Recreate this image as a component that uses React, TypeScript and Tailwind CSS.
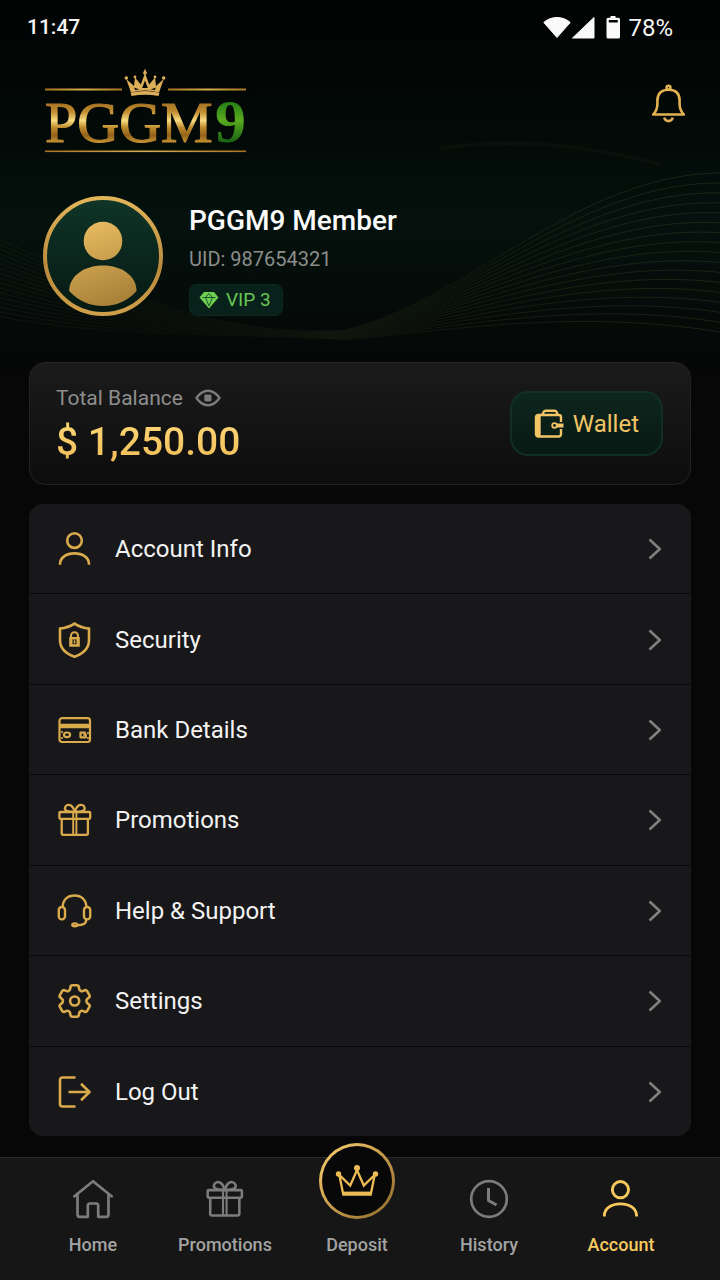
import React, { useState } from "react";

type IconProps = { className?: string };

const line = {
  fill: "none",
  stroke: "currentColor",
  strokeWidth: 2.6,
  strokeLinejoin: "round" as const,
};

function UserIcon({ className }: IconProps) {
  return (
    <svg viewBox="0 0 36 36" className={className} {...line} aria-hidden="true">
      <circle cx="17.5" cy="9.6" r="7.3" />
      <path d="M3 33.800v-.7C3 26.700 9 22.400 17.500 22.400S32 26.700 32 33.100v.7" />
    </svg>
  );
}

function ShieldIcon({ className }: IconProps) {
  return (
    <svg viewBox="0 0 36 36" className={className} {...line} strokeLinejoin="miter" aria-hidden="true">
      <path d="M17.5 1.6C13 4.5 8 6 3 6.6V18c0 8.400 5.500 13.600 14.500 16.800C26.500 31.600 32 26.400 32 18V6.600C27 6 22 4.500 17.500 1.600Z" />
      <path d="M14 15.500v-1.700a3.500 3.500 0 0 1 7 0v1.700" strokeWidth="2" />
      <path fill="currentColor" stroke="none" fillRule="evenodd" d="M12.200 15h10.600v9.800H12.200ZM15.500 17.500v4.800h4V17.500Z" />
      <path d="M17.500 18.200v3.400" strokeWidth="1.600" />
    </svg>
  );
}

function CardIcon({ className }: IconProps) {
  return (
    <svg viewBox="0 0 36 36" className={className} {...line} strokeWidth={2.200} aria-hidden="true">
      <rect x="2.500" y="6.200" width="30.500" height="23.800" rx="2.500" />
      <path d="M2.500 14h30.500" strokeWidth="4.400" />
      <ellipse cx="10" cy="22.800" rx="3.100" ry="2.300" />
      <path d="M28.800 20.500h-5.300v4.800h5.300v-2.600h-2.500" />
      <path d="M5 19v2M5 25v2M31 20v2M31 25v2" strokeWidth="1.600" />
    </svg>
  );
}

function GiftIcon({ className }: IconProps) {
  return (
    <svg viewBox="0 0 36 36" className={className} {...line} strokeWidth={2.300} aria-hidden="true">
      <rect x="2.400" y="10" width="30.800" height="6.800" rx="1" />
      <path d="M4.700 16.800v14.400a1.600 1.600 0 0 0 1.600 1.600h23a1.600 1.600 0 0 0 1.600-1.600V16.800" />
      <path d="M16.200 10v22.800M19.400 10v22.800" strokeWidth="1.900" />
      <path d="M17.500 9.800C9.500 10.200 7.500 8 8 5.700 8.600 3 11.600 2 14 3.500c2 1.300 3 3.800 3.500 6.300Z" />
      <path d="M18.100 9.800c8 .4 10-1.800 9.500-4.100C27 3 24 2 21.600 3.500c-2 1.300-3 3.800-3.500 6.300Z" />
    </svg>
  );
}

function HeadsetIcon({ className }: IconProps) {
  return (
    <svg viewBox="0 0 36 36" className={className} {...line} strokeWidth={2.400} aria-hidden="true">
      <rect x="1.800" y="14" width="6.200" height="12.400" rx="3" />
      <rect x="27" y="14" width="6.200" height="12.400" rx="3" />
      <path d="M5.700 14C5.700 7 10.400 2.500 17.500 2.500S29.300 7 29.300 14" />
      <path d="M29.300 26.400c0 4-3.400 5.800-9.300 5.800" />
      <ellipse cx="17.800" cy="31.800" rx="2.500" ry="1.400" />
    </svg>
  );
}

function GearIcon({ className }: IconProps) {
  return (
    <svg viewBox="1.900 1.700 20.600 20.600" className={className} {...line} strokeWidth={1.500} aria-hidden="true">
      <path d="M9.594 3.940c.09-.542.56-.94 1.110-.94h2.593c.55 0 1.020.398 1.110.94l.213 1.281c.063.374.313.686.645.87.074.04.147.083.22.127.325.196.72.257 1.075.124l1.217-.456a1.125 1.125 0 0 1 1.370.49l1.296 2.247a1.125 1.125 0 0 1-.26 1.431l-1.003.827c-.293.241-.438.613-.43.992a7.723 7.723 0 0 1 0 .255c-.008.378.137.75.43.991l1.004.827c.424.35.534.955.26 1.430l-1.298 2.247a1.125 1.125 0 0 1-1.369.491l-1.217-.456c-.355-.133-.75-.072-1.076.124a6.470 6.470 0 0 1-.22.128c-.331.183-.581.495-.644.869l-.213 1.281c-.09.543-.56.94-1.110.94h-2.594c-.55 0-1.019-.398-1.110-.94l-.213-1.281c-.062-.374-.312-.686-.644-.87a6.520 6.520 0 0 1-.22-.127c-.325-.196-.72-.257-1.076-.124l-1.217.456a1.125 1.125 0 0 1-1.369-.49l-1.297-2.247a1.125 1.125 0 0 1 .26-1.431l1.004-.827c.292-.24.437-.613.43-.991a6.932 6.932 0 0 1 0-.255c.007-.38-.138-.751-.43-.992l-1.004-.827a1.125 1.125 0 0 1-.26-1.430l1.297-2.247a1.125 1.125 0 0 1 1.370-.491l1.216.456c.356.133.751.072 1.076-.124.072-.044.146-.086.22-.128.332-.183.582-.495.644-.869l.214-1.280Z" />
      <circle cx="12" cy="12" r="2.600" />
    </svg>
  );
}

function LogOutIcon({ className }: IconProps) {
  return (
    <svg viewBox="0 0 36 36" className={className} {...line} aria-hidden="true">
      <path d="M18.500 3.500H5.500A2.500 2.500 0 0 0 3 6v24a2.500 2.500 0 0 0 2.500 2.500H18.500" />
      <path d="M11.500 18h21M24 9.800l8.500 8.200-8.500 8.200" />
    </svg>
  );
}

function ChevronIcon({ className }: IconProps) {
  return (
    <svg viewBox="0 0 14 24" className={className} {...line} aria-hidden="true">
      <path d="M1.500 2.500 11.800 12l-10.300 9.500" />
    </svg>
  );
}

function BellIcon({ className }: IconProps) {
  return (
    <svg viewBox="0 0 36 40" className={className} {...line} aria-hidden="true">
      <circle cx="17.500" cy="3.700" r="1.900" />
      <path d="M2.200 30.500C5.600 27 6.400 24 6.400 20v-3.500c0-7 4.100-10.800 11.100-10.800s11.100 3.800 11.100 10.800V20c0 4 .8 7 4.200 10.500Z" />
      <path d="M13.200 33.600c.8 2.300 2.400 3.500 4.300 3.500s3.500-1.200 4.300-3.500" />
    </svg>
  );
}

function EyeIcon({ className }: IconProps) {
  return (
    <svg viewBox="0 0 26 18" className={className} {...line} strokeWidth={2.400} aria-hidden="true">
      <path d="M1.500 9C5 4 8.500 1.800 13 1.800S21 4 24.500 9C21 14 17.500 16.200 13 16.200S5 14 1.500 9Z" />
      <rect x="9.300" y="5.600" width="7.200" height="6.800" rx="1.400" fill="currentColor" stroke="none" />
    </svg>
  );
}

function WalletIcon({ className }: IconProps) {
  return (
    <svg viewBox="0 0 30 30" className={className} {...line} strokeWidth={2.400} aria-hidden="true">
      <path d="M8.500 5.500 9.800 2.800C10.200 2 10.800 1.700 11.600 1.700h9.200c.8 0 1.400.4 1.700 1.100l1 2.700" />
      <path d="M27 13V8.200A2.200 2.200 0 0 0 24.800 6H4.200A2.200 2.200 0 0 0 2 8.200v17.100a2.200 2.200 0 0 0 2.200 2.200h20.600a2.200 2.200 0 0 0 2.200-2.200V20" />
      <path d="M4.700 6v21.500" strokeWidth="4" />
      <path d="M22 16.500h7.500" strokeWidth="4" />
      <circle cx="20.500" cy="16.500" r="2.300" strokeWidth="1.800" />
    </svg>
  );
}

function GemIcon({ className }: IconProps) {
  return (
    <svg viewBox="0 0 20 18" className={className} aria-hidden="true">
      <path d="M5 1h10l4.500 5.500L10 17.500.5 6.500Z" fill="#6fcf4f" />
      <path d="M3.500 6.500h13M6.500 6.500 10 15l3.500-8.500L10 2.500Z" fill="none" stroke="#14462c" strokeWidth=".9" />
    </svg>
  );
}

function HomeIcon({ className }: IconProps) {
  return (
    <svg viewBox="0 0 40 40" className={className} {...line} strokeWidth={2.700} strokeLinecap="round" aria-hidden="true">
      <path d="M1.400 17.300 20 2.200l18.600 15.100" />
      <path d="M4.500 15v20.500a2.300 2.300 0 0 0 2.300 2.300h8V26.500a2 2 0 0 1 2-2h6.400a2 2 0 0 1 2 2v11.300h8a2.300 2.300 0 0 0 2.300-2.300V15" />
    </svg>
  );
}

function ClockIcon({ className }: IconProps) {
  return (
    <svg viewBox="0 0 40 40" className={className} {...line} strokeWidth={2.700} aria-hidden="true">
      <circle cx="20" cy="20" r="17.800" />
      <path d="M19.500 9v12.500l8 4.500" strokeWidth="3" />
    </svg>
  );
}

function DepositCrown({ className }: IconProps) {
  return (
    <svg viewBox="0 0 44 34" className={className} {...line} strokeLinejoin="miter" aria-hidden="true">
      <path d="M4.300 11 8.300 30.700h27.400L39.700 11 28.800 21.500 22 6 15.200 21.500Z" strokeWidth="2.300" />
      <path d="M8 28.800h28" strokeWidth="2.400" />
      <g fill="currentColor" stroke="none">
        <circle cx="22" cy="4" r="3" />
        <circle cx="3.500" cy="10" r="2.700" />
        <circle cx="40.500" cy="10" r="2.700" />
      </g>
    </svg>
  );
}

function Logo() {
  return (
    <svg viewBox="0 0 202 86" className="h-[86px] w-[202px] overflow-visible" role="img" aria-label="PGGM9">
      <defs>
        <linearGradient id="metal" x1="0" y1="33" x2="0" y2="76" gradientUnits="userSpaceOnUse">
          <stop offset="0" stopColor="#a06c20" />
          <stop offset=".25" stopColor="#c08d30" />
          <stop offset=".45" stopColor="#f8dc80" />
          <stop offset=".62" stopColor="#bd8a2c" />
          <stop offset=".8" stopColor="#94621b" />
          <stop offset="1" stopColor="#d29d38" />
        </linearGradient>
        <linearGradient id="leaf" x1="0" y1="33" x2="0" y2="76" gradientUnits="userSpaceOnUse">
          <stop offset="0" stopColor="#237a18" />
          <stop offset=".45" stopColor="#59ab1d" />
          <stop offset="1" stopColor="#155c12" />
        </linearGradient>
        <linearGradient id="rule" x1="0" x2="1">
          <stop offset="0" stopColor="#a87422" />
          <stop offset=".5" stopColor="#d9ad4b" />
          <stop offset="1" stopColor="#a87422" />
        </linearGradient>
      </defs>
      <g fill="url(#rule)">
        <rect x="0" y="20.500" width="77" height="2" />
        <rect x="123" y="20.500" width="78" height="2" />
        <rect x="0" y="82.500" width="201" height="1.600" />
      </g>
      <g fill="#dcae58">
        <path
          fillRule="evenodd"
          d="M86 24.500 81.200 11 89 18 90 9.500 95.800 16.500 100 5 104.200 16.500 110 9.500 111 18 118.800 11 114 24.500Q100 20.500 86 24.500ZM89 19.500l1.300 2.600 4.200-.7ZM100 12.500l-2.800 7.500h5.600ZM111 19.500l-5.500 1.900 4.200.7Z"
        />
        <path d="M85.500 24.800Q100 21 114.500 24.800L113.500 28Q100 25.600 86.500 28Z" />
        <circle cx="100" cy="4.800" r="1.900" />
        <circle cx="81.300" cy="10" r="1.800" />
        <circle cx="118.700" cy="10" r="1.800" />
        <circle cx="90" cy="9" r="1.400" />
        <circle cx="110" cy="9" r="1.400" />
        <path d="M99.200 1.500h1.600v3h-1.600Z" />
      </g>
      <text x="0" y="74" fontSize="58" fontFamily="'Liberation Serif', serif" fill="url(#metal)" stroke="url(#metal)" strokeWidth="1.200">
        PGGM
      </text>
      <text x="170" y="74" fontSize="62" fontWeight="700" fontFamily="'Liberation Serif', serif" fill="url(#leaf)">
        9
      </text>
    </svg>
  );
}

const waves = Array.from({ length: 17 }, (_, i) => {
  const left = `M-10 ${235 + i * 5}C110 ${290 + i * 3} 220 ${338 - i * 0.3} 345 ${330 + i * 0.6}`;
  const right = `C${470 - i * 2} ${300 + i * 2} 580 ${171 + i * 8.5} 725 ${173 + i * 10}`;
  return left + right;
});

function Waves() {
  return (
    <svg
      viewBox="0 0 720 360"
      preserveAspectRatio="none"
      className="pointer-events-none absolute inset-x-0 top-0 h-[360px] w-full"
      fill="none"
      aria-hidden="true"
    >
      <defs>
        <linearGradient id="waveFade" x1="0" x2="720" y1="0" y2="0" gradientUnits="userSpaceOnUse">
          <stop offset="0" stopColor="#4e5a2c" stopOpacity=".14" />
          <stop offset=".4" stopColor="#4e5a2c" stopOpacity=".05" />
          <stop offset=".6" stopColor="#5a6a30" stopOpacity=".15" />
          <stop offset="1" stopColor="#4e5a2c" stopOpacity=".3" />
        </linearGradient>
      </defs>
      {waves.map((d, i) => (
        <path key={i} d={d} stroke="url(#waveFade)" strokeWidth="1" />
      ))}
      <path d="M440 148C510 139 570 142 660 164" stroke="#3a3a16" strokeOpacity=".12" strokeWidth="4" />
    </svg>
  );
}

const menu = [
  { label: "Account Info", Icon: UserIcon },
  { label: "Security", Icon: ShieldIcon },
  { label: "Bank Details", Icon: CardIcon },
  { label: "Promotions", Icon: GiftIcon },
  { label: "Help & Support", Icon: HeadsetIcon },
  { label: "Settings", Icon: GearIcon },
  { label: "Log Out", Icon: LogOutIcon },
];

function StatusBar() {
  return (
    <div className="flex h-14 items-center justify-between pr-[47px] pl-[27px] text-[#f4f4f4]">
      <span className="text-[21px] font-medium">11:47</span>
      <div className="flex items-center">
        <svg viewBox="0 0 78 24" className="mr-[7px] h-6 w-[78px]" fill="#fafafa" aria-hidden="true">
          <path d="M14 21.500.8 6.500C8 -.2 20 -.2 27.200 6.500Z" stroke="#fafafa" strokeWidth="1" strokeLinejoin="round" />
          <path d="M51 1.500V22H29.500Z" stroke="#fafafa" strokeWidth="1" strokeLinejoin="round" />
          <path
            fillRule="evenodd"
            d="M67.500 0h5v1.800h3a1.500 1.500 0 0 1 1.500 1.500V21a1.500 1.500 0 0 1-1.500 1.500H65A1.500 1.500 0 0 1 63.500 21V3.300A1.500 1.500 0 0 1 65 1.800h2.500ZM65.800 4v2.500h9V4Z"
          />
        </svg>
        <span className="text-[24px]">78%</span>
      </div>
    </div>
  );
}

function Profile() {
  return (
    <section className="mt-[42px] flex pl-[43px]">
      <svg viewBox="0 0 120 120" className="h-[120px] w-[120px] shrink-0" role="img" aria-label="Profile picture">
        <defs>
          <linearGradient id="ring" x1="0" y1="0" x2="0" y2="1">
            <stop offset="0" stopColor="#e3b55a" />
            <stop offset=".6" stopColor="#b98a3c" />
            <stop offset="1" stopColor="#cf9f49" />
          </linearGradient>
          <linearGradient id="person" x1="30" y1="25" x2="60" y2="110" gradientUnits="userSpaceOnUse">
            <stop offset="0" stopColor="#ecc064" />
            <stop offset="1" stopColor="#a98138" />
          </linearGradient>
          <linearGradient id="disc" x1="0" y1="0" x2="0" y2="1">
            <stop offset="0" stopColor="#103528" />
            <stop offset="1" stopColor="#051812" />
          </linearGradient>
        </defs>
        <circle cx="60" cy="60" r="58" fill="url(#disc)" stroke="url(#ring)" strokeWidth="4" />
        <circle cx="60" cy="45" r="19.300" fill="url(#person)" />
        <path d="M26.200 95C26.200 80 41 69.500 60 69.500S93.500 80 93.500 95Q80 110 60 110T26.200 95Z" fill="url(#person)" />
      </svg>
      <div className="ml-[26px] flex flex-col items-start pt-[7px]">
        <h1 className="text-[28px] leading-9 font-medium text-[#fbfbfb]">PGGM9 Member</h1>
        <p className="mt-2 text-[20px] leading-6 text-[#8b8e8c]">UID: 987654321</p>
        <span className="mt-[13px] flex h-8 items-center gap-[7px] rounded-lg border border-[#0b2a20] bg-[#08211a] pr-[11px] pl-[9px] text-[19px] text-[#68c653]">
          <GemIcon className="h-[18px] w-5" />
          VIP 3
        </span>
      </div>
    </section>
  );
}

function BalanceCard() {
  const [visible, setVisible] = useState(true);
  return (
    <section className="mx-[29px] mt-[46px] flex h-[123px] items-center justify-between rounded-[16px] border border-[#232323] bg-linear-to-b from-[#1b1b1b] to-[#0d0d0d] pr-[27px] pl-[26px]">
      <div className="pt-1">
        <div className="flex items-center gap-3 text-[21px] leading-6 text-[#8e8e8e]">
          <span>Total Balance</span>
          <button type="button" aria-label="Toggle balance visibility" onClick={() => setVisible(!visible)}>
            <EyeIcon className="h-[18px] w-[26px] text-[#7b7b7b]" />
          </button>
        </div>
        <p className="mt-2 bg-linear-to-b from-[#ffd978] to-[#eeba54] bg-clip-text text-[39px] leading-12 font-medium text-transparent">
          {visible ? "$ 1,250.00" : "$ ••••••"}
        </p>
      </div>
      <button
        type="button"
        className="flex h-[65px] items-center gap-[9px] rounded-[18px] border-2 border-[#112f26] bg-linear-to-b from-[#0d261d] to-[#081914] px-[22px] text-[24px] text-[#f2c466]"
      >
        <WalletIcon className="h-[30px] w-[30px]" />
        Wallet
      </button>
    </section>
  );
}

function Menu() {
  return (
    <ul className="mx-[29px] mt-[19px] mb-[21px] flex flex-1 flex-col overflow-hidden rounded-[14px] bg-[#18181a]">
      {menu.map(({ label, Icon }) => (
        <li key={label} className="flex flex-1 border-b border-[#080808] last:border-b-0">
          <a href="#" className="flex min-h-[72px] flex-1 items-center pt-px pr-[29px] pl-[28px] text-[24px] text-[#f3f3f3]">
            <Icon className="h-9 w-9 text-[#daab4c]" />
            <span className="ml-[22px] flex-1">{label}</span>
            <ChevronIcon className="h-6 w-[14px] text-[#7f7f80]" />
          </a>
        </li>
      ))}
    </ul>
  );
}

function NavItem({ label, children, active }: { label: string; children: React.ReactNode; active?: boolean }) {
  return (
    <a
      href="#"
      aria-current={active ? "page" : undefined}
      className={
        "flex flex-col items-center text-[18px] leading-6 font-medium " +
        (active ? "text-[#f7cb60]" : "text-[#a3a3a3]")
      }
    >
      {children}
      <span className="mt-[14px]">{label}</span>
    </a>
  );
}

function BottomNav() {
  return (
    <nav className="grid grid-cols-5 border-t border-[#2a2a2a] bg-[#161616] pt-[21px] pr-[33px] pb-[23px] pl-[27px]">
      <NavItem label="Home">
        <HomeIcon className="h-10 w-10 text-[#7c7c7c]" />
      </NavItem>
      <NavItem label="Promotions">
        <GiftIcon className="h-10 w-10 text-[#7c7c7c]" />
      </NavItem>
      <NavItem label="Deposit">
        <span className="-mt-[36px] flex h-[76px] w-[76px] items-center justify-center rounded-full bg-linear-to-br from-[#ffd370] to-[#8f682b] p-[3px]">
          <span className="flex h-full w-full items-center justify-center rounded-full bg-[#080808]">
            <DepositCrown className="h-[34px] w-[44px] text-[#efbd56]" />
          </span>
        </span>
      </NavItem>
      <NavItem label="History">
        <ClockIcon className="h-10 w-10 text-[#7c7c7c]" />
      </NavItem>
      <NavItem label="Account" active>
        <UserIcon className="h-10 w-10 text-[#f7c85c]" />
      </NavItem>
    </nav>
  );
}

export default function App() {
  return (
    <div className="relative flex min-h-screen flex-col bg-[#070707] font-[Roboto,sans-serif]">
      <div className="absolute inset-x-0 top-0 h-[370px] bg-linear-to-b from-[#010303] via-[#04110c] via-60% to-[#050706]">
        <Waves />
      </div>
      <div className="relative flex flex-1 flex-col">
        <StatusBar />
        <header className="flex items-start justify-between pt-3 pr-[33px] pl-[45px]">
          <Logo />
          <button type="button" aria-label="Notifications" className="mt-4">
            <BellIcon className="h-10 w-9 text-[#e3b052]" />
          </button>
        </header>
        <Profile />
        <BalanceCard />
        <Menu />
        <BottomNav />
      </div>
    </div>
  );
}
